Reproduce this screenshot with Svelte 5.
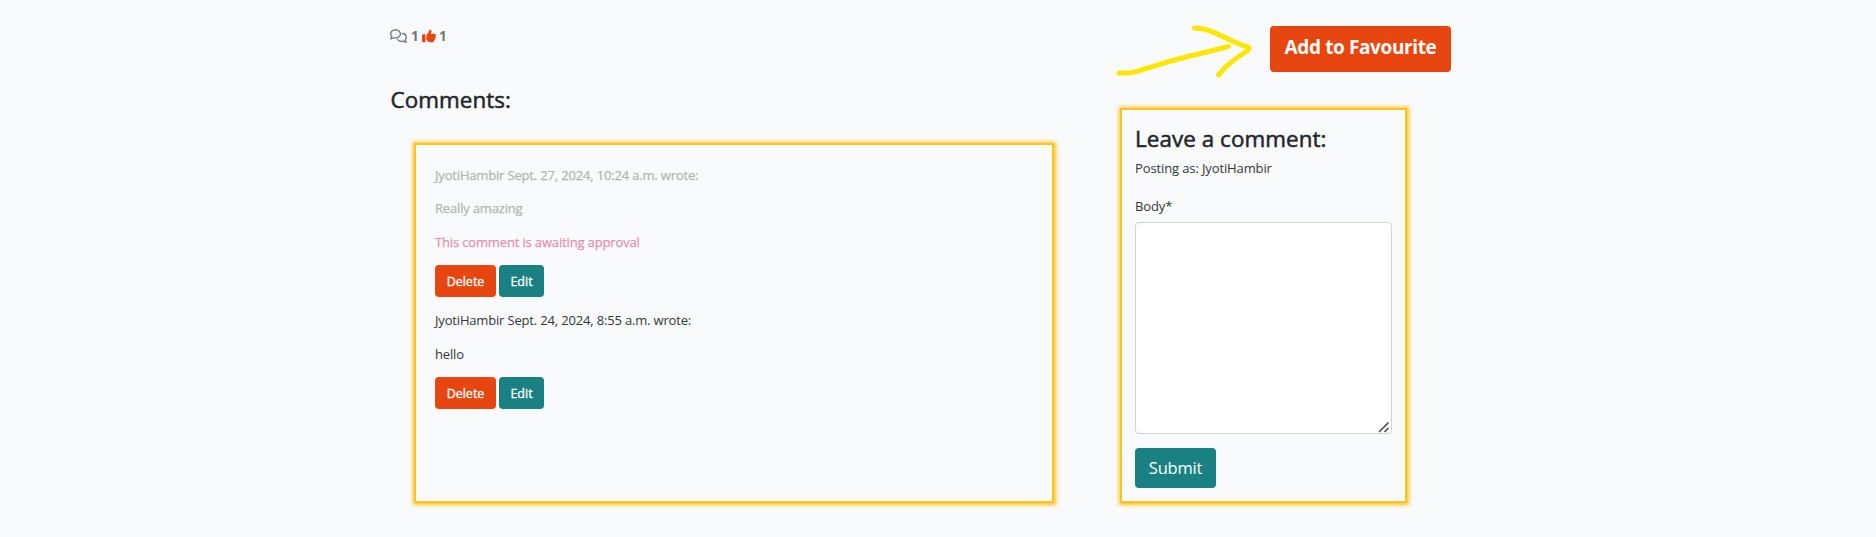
<script>
  const comments = [
    { by: 'JyotiHambir Sept. 27, 2024, 10:24 a.m. wrote:', body: 'Really amazing', pending: true },
    { by: 'JyotiHambir Sept. 24, 2024, 8:55 a.m. wrote:', body: 'hello', pending: false },
  ];
</script>

<main>
  <section class="left">
    <div class="counts">
      <svg class="chat" viewBox="0 0 640 512" width="17" height="14" fill="currentColor" aria-hidden="true">
        <path d="M88.2 309.1c9.8-18.3 6.8-40.8-7.5-55.8C59.4 230.9 48 204 48 176c0-63.500 63.800-128 160-128s160 64.500 160 128s-63.800 128-160 128c-13.100 0-25.800-1.300-37.800-3.600c-10.400-2-21.200-.6-30.700 4.200c-4.100 2.100-8.300 4.100-12.600 6c-16 7.200-32.900 13.500-49.900 18c2.800-4.600 5.400-9.100 7.900-13.600c1.100-1.900 2.200-3.900 3.200-5.900zM0 176c0 41.800 17.200 80.100 45.900 110.300c-.9 1.700-1.900 3.500-2.800 5.100c-10.300 18.400-22.300 36.500-36.600 52.100c-6.600 7-8.300 17.200-4.600 25.900C5.800 378.300 14.400 384 24 384c43 0 86.500-13.300 122.700-29.700c4.800-2.200 9.600-4.500 14.200-6.800c15.100 3 30.900 4.500 47.100 4.500c114.900 0 208-78.800 208-176S322.900 0 208 0S0 78.800 0 176zM432 480c16.200 0 31.900-1.600 47.100-4.500c4.600 2.300 9.400 4.600 14.200 6.800C529.500 498.700 573 512 616 512c9.600 0 18.200-5.700 22-14.500c3.800-8.800 2-19-4.600-25.900c-14.200-15.600-26.200-33.700-36.600-52.100c-.9-1.700-1.900-3.400-2.800-5.100C622.800 384.100 640 345.800 640 304c0-94.400-87.900-171.500-198.200-175.800c4.100 15.200 6.200 31.200 6.200 47.800l0 .6c87.200 6.700 144 67.500 144 127.400c0 28-11.400 54.900-32.700 77.200c-14.300 15-17.300 37.600-7.500 55.800c1.100 2 2.200 4 3.200 5.900c2.500 4.500 5.200 9 7.900 13.600c-17-4.500-33.900-10.700-49.900-18c-4.300-1.900-8.500-3.900-12.600-6c-9.500-4.800-20.300-6.200-30.700-4.200c-12.100 2.400-24.800 3.600-37.800 3.600c-61.700 0-110-26.500-136.800-62.300c-16 5.400-32.800 9.400-50 11.800C279 439.800 350 480 432 480z"/>
      </svg>
      <b>1</b>
      <svg class="like" viewBox="0 0 512 512" width="14" height="14" fill="currentColor" aria-hidden="true">
        <path d="M313.400 32.900c26 5.200 42.900 30.500 37.700 56.500l-2.300 11.400c-5.300 26.700-15.100 52.100-28.800 75.200H464c26.500 0 48 21.500 48 48c0 18.500-10.500 34.600-25.900 42.600C497 275.400 504 288.900 504 304c0 23.400-16.800 42.900-38.900 47.100c4.400 7.300 6.900 15.800 6.900 24.900c0 21.300-13.900 39.400-33.100 45.600c.7 3.300 1.100 6.800 1.100 10.400c0 26.500-21.500 48-48 48H294.500c-19 0-37.500-5.600-53.300-16.100l-38.500-25.700C176 420.400 160 390.400 160 358.300V247.100c0-29.200 13.300-56.700 36-75l7.400-5.900c26.500-21.200 44.600-51 51.200-84.200l2.300-11.400c5.200-26 30.500-42.900 56.500-37.700zM32 192H96c17.700 0 32 14.300 32 32V448c0 17.700-14.300 32-32 32H32c-17.700 0-32-14.300-32-32V224c0-17.700 14.300-32 32-32z"/>
      </svg>
      <b>1</b>
    </div>
    <h3 class="heading">Comments:</h3>
    <div class="card list">
      {#each comments as c}
        <article>
          <div class:pending={c.pending}>
            <p>{c.by}</p>
            <p>{c.body}</p>
            {#if c.pending}<p class="awaiting">This comment is awaiting approval</p>{/if}
          </div>
          <div class="actions">
            <button class="small danger">Delete</button>
            <button class="small edit">Edit</button>
          </div>
        </article>
      {/each}
    </div>
  </section>

  <section class="right">
    <div class="top">
      <svg class="arrow" width="140" height="58" viewBox="0 0 140 58" aria-hidden="true">
        <path d="M6 53H15C25 53 35 46 77 36Q98 31 115.500 26.500M81.500 8C100 8 112 20 134.500 27Q138 28 134 31C122 39 113 45 105.500 55"/>
      </svg>
      <button class="fav">Add to Favourite</button>
    </div>
    <form class="card form" onsubmit={(e) => e.preventDefault()}>
      <h3>Leave a comment:</h3>
      <p class="posting">Posting as: JyotiHambir</p>
      <label for="body">Body*</label>
      <div class="field">
        <textarea id="body"></textarea>
        <svg class="grip" width="12" height="12" viewBox="0 0 12 12" aria-hidden="true"><path d="M1 11L10.500 1.500M6.500 11L10.500 7"/></svg>
      </div>
      <button class="submit">Submit</button>
    </form>
  </section>
</main>

<style>
  :global(body) { background: #f9fafc; }
  main {
    box-sizing: border-box;
    height: 537px;
    padding: 26px 0 0 390px;
    display: flex;
    font-family: "Open Sans", "Noto Sans", sans-serif;
    color: #212529;
    overflow: hidden;
  }
  h3, p { margin: 0; }
  button { border: 0; border-radius: 4px; color: #fff; font-family: inherit; padding: 0; white-space: nowrap; }
  .left { width: 729px; }
  .counts { height: 20px; display: flex; align-items: center; color: #6c757d; font-size: 13.500px; line-height: 20px; }
  .counts b { font-weight: 700; width: 8px; }
  .chat { margin-right: 4px; }
  .like { color: #e84610; margin: 0 3px 0 3px; }
  h3 { font-size: 22.400px; font-weight: 400; -webkit-text-stroke: .5px currentColor; letter-spacing: .07px; line-height: 28px; white-space: nowrap; }
  .heading { margin-top: 40px; padding-left: .5px; }
  .card { box-sizing: border-box; border: 2px solid #ffc31f; box-shadow: 0 0 4px 1.500px #ffc31f; }
  .list { margin: 29px 0 0 24px; width: 640px; height: 360px; padding: 20px 19px; }
  p, label { font-size: 13px; line-height: 20px; letter-spacing: -.12px; color: #33373b; white-space: nowrap; }
  .list p { height: 20px; margin-bottom: 13.400px; letter-spacing: -.17px; }
  .pending p { opacity: .5; color: #6b6f72; -webkit-text-stroke: .25px currentColor; }
  .pending .awaiting { color: #c8285a; letter-spacing: -.15px; }
  .actions { display: flex; gap: 3px; margin: -.2px 0 13.200px; }
  .small { height: 32px; padding-top: 1px; font-size: 12.500px; -webkit-text-stroke: .3px currentColor; }
  .danger { width: 61px; background: #e84610; }
  .edit { width: 45px; background: #198181; }
  .top { display: flex; height: 46px; }
  .arrow { margin: -6px 0 0 -6px; fill: none; stroke: #ffe600; stroke-width: 5; stroke-linecap: round; stroke-linejoin: round; }
  .fav { width: 181px; height: 46px; margin-left: 17px; padding-bottom: 4px; background: #e84610; font-size: 19px; font-weight: 700; letter-spacing: -.38px; }
  .form { margin: 36px 0 0 1px; width: 287px; height: 395px; padding: 15px 13px; display: flex; flex-direction: column; align-items: flex-start; }
  .posting { margin-top: 5px; }
  .form label { margin-top: 18px; }
  .field { position: relative; margin-top: 6px; height: 212px; }
  textarea { display: block; box-sizing: border-box; width: 257px; height: 212px; margin: 0; border: 1px solid #ced4da; border-radius: 4px; background: #fff; resize: none; }
  .grip { position: absolute; right: 2px; bottom: 1px; fill: none; stroke: #444; stroke-width: 1.500; }
  .submit { width: 81px; height: 40px; flex: none; margin-top: 14px; padding-bottom: 1px; background: #198181; font-size: 16.500px; letter-spacing: -.2px; }
</style>
